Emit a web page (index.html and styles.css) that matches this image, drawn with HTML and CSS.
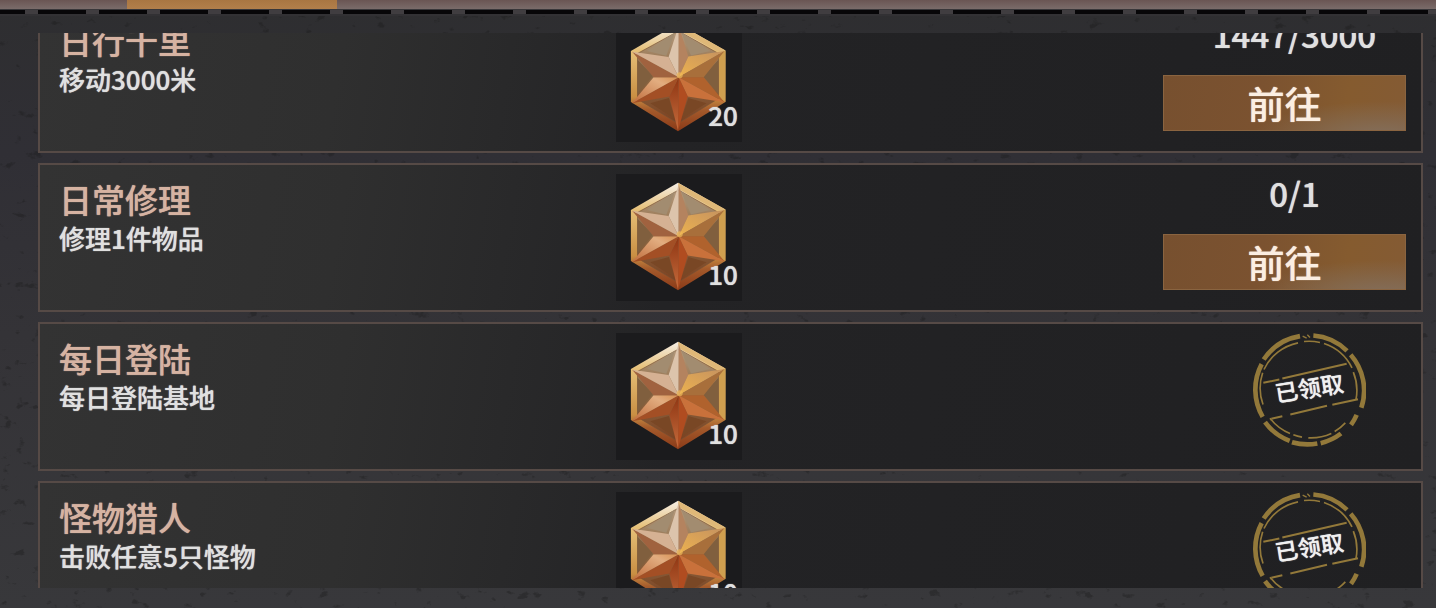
FILE: index.html
```html
<!DOCTYPE html>
<html lang="zh-CN">
<head>
<meta charset="utf-8">
<meta name="viewport" content="width=device-width, initial-scale=1">
<title>每日任务</title>
<link rel="stylesheet" href="styles.css">
</head>
<body>
<svg class="texture" aria-hidden="true">
  <filter id="grit" x="0" y="0" width="100%" height="100%">
    <feTurbulence type="fractalNoise" baseFrequency="0.07 0.1" numOctaves="4" seed="8"/>
    <feColorMatrix values="0 0 0 0 0.01  0 0 0 0 0.01  0 0 0 0 0.01  9 0 0 0 -6.1"/>
  </filter>
  <rect width="100%" height="100%" filter="url(#grit)"/>
</svg>

<svg class="defs" aria-hidden="true">
  <defs>
    <linearGradient id="rim" x1="0" y1="0" x2="0" y2="1">
      <stop offset="0" stop-color="#f6efe6"/><stop offset=".25" stop-color="#e6c078"/>
      <stop offset=".68" stop-color="#c98f43"/><stop offset=".8" stop-color="#a45a2b"/><stop offset="1" stop-color="#8a3a18"/>
    </linearGradient>
    <linearGradient id="plate" x1="0" y1="0" x2="0" y2="1">
      <stop offset="0" stop-color="#b59a7c"/><stop offset=".5" stop-color="#8b6844"/><stop offset="1" stop-color="#7b4020"/>
    </linearGradient>
    <linearGradient id="low" x1="0" y1="0" x2="0" y2="1">
      <stop offset="0" stop-color="#8e3512"/><stop offset="1" stop-color="#c56b3c"/>
    </linearGradient>
    <linearGradient id="gold" x1="0" y1="1" x2="1" y2="0">
      <stop offset="0" stop-color="#edb24f"/><stop offset="1" stop-color="#c59260"/>
    </linearGradient>
    <linearGradient id="peach" x1="0" y1="1" x2="1" y2="0">
      <stop offset="0" stop-color="#c06c3c"/><stop offset=".7" stop-color="#e2ad80"/><stop offset="1" stop-color="#d88f50"/>
    </linearGradient>
  </defs>
  <symbol id="medal" viewBox="48 42 376 380">
    <path d="M233 68 375 148V302L233 390 92 302V150Z" fill="url(#rim)"/>
    <path d="M233 68 375 148 352 151 235 88Z" fill="#dfb878"/>
    <path d="M375 148V302L355 291V158Z" fill="#cf9f4f"/>
    <path d="M235 90 354 157V292L233 366 112 294V157Z" fill="url(#plate)" stroke="#755134" stroke-width="2"/>
    <path d="M242 94 330 150 272 163ZM224 94 140 150 198 164Z" fill="#a28c70"/>
    <path d="M112 176 158 224 112 278ZM354 176 308 226 354 278Z" fill="#805f3e"/>
    <path d="M150 306 206 290 222 352ZM318 306 264 290 245 352Z" fill="#794725"/>
    <path d="M235 74 205 168 235 228Z" fill="#dcc4ac"/>
    <path d="M235 74 264 166 235 228Z" fill="#b4835f"/>
    <path d="M372 150 264 166 235 228Z" fill="url(#gold)"/>
    <path d="M372 150 310 228 235 228Z" fill="#a86f3b"/>
    <path d="M372 303 310 228 235 228Z" fill="#b0622d"/>
    <path d="M372 303 262 286 235 228Z" fill="#c9713b"/>
    <path d="M233 388 262 286 235 228Z" fill="#b04c20"/>
    <path d="M233 388 207 286 235 228Z" fill="url(#low)"/>
    <path d="M95 306 207 286 235 228Z" fill="#a34f25"/>
    <path d="M95 306 160 228 235 228Z" fill="url(#peach)"/>
    <path d="M96 152 160 228 235 228Z" fill="#a0623f"/>
    <path d="M96 152 205 168 235 228Z" fill="#d5b193"/>
    <circle cx="238" cy="222" r="9" fill="#f0b958" opacity=".7"/>
  </symbol>
  <symbol id="seal" viewBox="66 38 342 344">
    <g fill="none" stroke="#93793a">
      <path d="M101 120A163 163 0 0 1 210 50M250 48A163 163 0 0 1 351 94M362 106A163 163 0 0 1 394 265M380 286A163 163 0 0 1 363 316M333 342A163 163 0 0 1 272 371M262 372A163 163 0 0 1 186 368M179 364A163 163 0 0 1 105 308M98 292A163 163 0 0 1 95 134" stroke-width="14"/>
      <path d="M218 50 230 56M232 46 240 54" stroke-width="4"/>
      <path d="M102 150A145 145 0 0 1 204 70M222 66A145 145 0 0 1 270 69M282 72A145 145 0 0 1 366 145M370 158A145 145 0 0 1 378 240M346 310A145 145 0 0 1 314 336M304 342A145 145 0 0 1 235 355M216 353A145 145 0 0 1 190 346M180 342A145 145 0 0 1 120 296M99 255A145 145 0 0 1 98 160" stroke-width="5"/>
      <path d="M100 190 148 180M157 177 350 133M124 298 157 290M181 285 291 259M307 256 384 239" stroke-width="6"/>
    </g>
  </symbol>
</svg>

<header class="topbar"><div class="tab"></div></header>
<div class="stitch"></div>

<main class="viewport">
  <ul class="tasks">
    <li class="task">
      <div class="info"><h2 class="title">日行千里</h2><p class="desc">移动3000米</p></div>
      <div class="reward"><svg class="medal" aria-hidden="true"><use href="#medal"/></svg><span class="amount">20</span></div>
      <div class="action"><p class="count">1447/3000</p><button class="go" type="button">前往</button></div>
    </li>
    <li class="task">
      <div class="info"><h2 class="title">日常修理</h2><p class="desc">修理1件物品</p></div>
      <div class="reward"><svg class="medal" aria-hidden="true"><use href="#medal"/></svg><span class="amount">10</span></div>
      <div class="action"><p class="count">0/1</p><button class="go" type="button">前往</button></div>
    </li>
    <li class="task">
      <div class="info"><h2 class="title">每日登陆</h2><p class="desc">每日登陆基地</p></div>
      <div class="reward"><svg class="medal" aria-hidden="true"><use href="#medal"/></svg><span class="amount">10</span></div>
      <div class="action"><div class="stamp"><svg class="seal" aria-hidden="true"><use href="#seal"/></svg><span class="claimed">已领取</span></div></div>
    </li>
    <li class="task">
      <div class="info"><h2 class="title">怪物猎人</h2><p class="desc">击败任意5只怪物</p></div>
      <div class="reward"><svg class="medal" aria-hidden="true"><use href="#medal"/></svg><span class="amount">10</span></div>
      <div class="action"><div class="stamp"><svg class="seal" aria-hidden="true"><use href="#seal"/></svg><span class="claimed">已领取</span></div></div>
    </li>
  </ul>
</main>
</body>
</html>
```
FILE: styles.css
```css
* { box-sizing: border-box; }

body {
  margin: 0;
  height: 100vh;
  display: flex;
  flex-direction: column;
  overflow: hidden;
  color: #e0e0e0;
  background: linear-gradient(#2e2e30 0, #302f35 25%, #343337 55%, #38383b 100%);
  font-family: "Noto Sans CJK SC", sans-serif;
  font-weight: 500;
  text-shadow: 0 0 1px currentColor;
}

h2, p, ul { margin: 0; padding: 0; font-weight: 500; }

.defs { position: absolute; width: 0; height: 0; }

.texture {
  position: absolute;
  inset: 0;
  width: 100%;
  height: 100%;
  opacity: .35;
  z-index: -1;
}

.topbar {
  flex: none;
  height: 9px;
  padding-left: 127px;
  background: linear-gradient(#6a5553, #7a6c6a);
}

.tab { width: 210px; height: 100%; background: linear-gradient(#a97642, #b27f4b); }

.stitch {
  flex: none;
  height: 7px;
  border-top: 1px solid #39373a;
  border-bottom: 2px solid #323134;
  background: repeating-linear-gradient(90deg, #070608 0 48px, #403d40 48px 61px) -23px 0 / calc(100% + 23px) 100% no-repeat;
}

.viewport {
  flex: 1;
  min-height: 0;
  margin: 17px 13px 20px 38px;
  overflow: hidden;
}

/* The list is scrolled part of the way past its first task. */
.tasks {
  display: grid;
  gap: 10px;
  margin-top: -29px;
  list-style: none;
}

.task {
  display: grid;
  grid-template-columns: 41.7% 126px 1fr;
  height: 149px;
  border: 2px solid #564a46;
  background: linear-gradient(100deg, #333333 0, #2f2f2f 22%, #232325 46%, #202022 100%);
}

.info { padding: 14px 0 0 19px; }
.title { font-size: 33px; line-height: 40px; color: #d6b3a2; }
.desc { font-size: 26px; line-height: 38px; }

.reward {
  position: relative;
  height: 127px;
  margin-top: 9px;
  background: #1b1b1d;
}

.medal { display: block; width: 100%; height: 100%; }

.amount {
  position: absolute;
  right: 4px;
  bottom: 10px;
  font-size: 26px;
  line-height: 34px;
}

.action {
  display: flex;
  flex-direction: column;
  align-items: flex-end;
  padding: 8px 15px 0 0;
}

.count {
  width: 243px;
  padding-left: 20px;
  font-size: 33px;
  line-height: 40px;
  text-align: center;
}

.go {
  width: 243px;
  height: 56px;
  margin-top: 21px;
  padding: 0;
  border: 1px solid #8a6440;
  background:
    radial-gradient(ellipse at 90% 115%, #83705f 0, #83705f00 42%),
    linear-gradient(100deg, #77502f 0, #7b5230 40%, #855b2f 75%, #845b34 100%);
  color: #fbeee2;
  font: 500 37px/54px "Noto Sans CJK SC", sans-serif;
  text-shadow: 0 0 1px currentColor;
}

.stamp {
  display: grid;
  place-items: center;
  width: 114px;
  height: 115px;
  margin-right: 40px;
}

.seal, .claimed { grid-area: 1 / 1; }
.seal { width: 100%; height: 100%; }
.claimed { padding-bottom: 6px; font-size: 23px; line-height: 30px; color: #f0f0f0; transform: rotate(-9deg); }
```
